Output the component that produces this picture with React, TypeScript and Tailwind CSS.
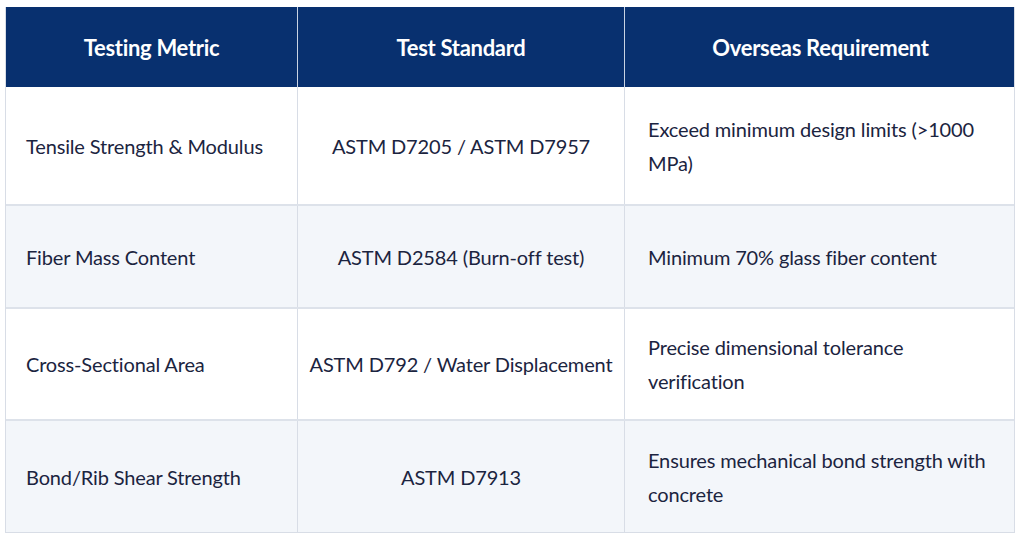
const rows = [
  {
    metric: "Tensile Strength & Modulus",
    standard: "ASTM D7205 / ASTM D7957",
    req: "Exceed minimum design limits (>1000 MPa)",
    h: "h-[117px]",
  },
  {
    metric: "Fiber Mass Content",
    standard: "ASTM D2584 (Burn-off test)",
    req: "Minimum 70% glass fiber content",
    h: "h-[103px]",
  },
  {
    metric: "Cross-Sectional Area",
    standard: "ASTM D792 / Water Displacement",
    req: "Precise dimensional tolerance verification",
    h: "h-[112px]",
  },
  {
    metric: "Bond/Rib Shear Strength",
    standard: "ASTM D7913",
    req: "Ensures mechanical bond strength with concrete",
    h: "h-[113px]",
  },
];

export default function App() {
  return (
    <div className="w-[1024px] h-[548px] bg-white pt-[7px] pl-[5px] font-['Lato','Noto_Sans',sans-serif] text-[#1b2440]">
      <div className="w-[1010px] border-x border-b border-[#d8dde6]">
        {/* header */}
        <div className="grid grid-cols-[291px_327px_392px] h-[80px] bg-[#08306f] text-white font-bold text-[22px] tracking-[-0.3px]">
          <div className="flex items-center justify-center">Testing Metric</div>
          <div className="flex items-center justify-center border-l border-[#c9d3e3]">Test Standard</div>
          <div className="flex items-center justify-center border-l border-[#c9d3e3]">Overseas Requirement</div>
        </div>

        {rows.map((r, i) => (
          <div
            key={r.metric}
            className={`grid grid-cols-[291px_327px_392px] ${r.h} text-[20px] tracking-[-0.15px] ${
              i > 0 ? "border-t-2 border-[#dde2ea]" : ""
            } ${i % 2 === 1 ? "bg-[#f3f6fa]" : "bg-white"}`}
          >
            <div className="flex items-center pl-[20px]">{r.metric}</div>
            <div className="flex items-center justify-center border-l border-[#d8dde6] text-center">
              {r.standard}
            </div>
            <div className="flex items-center border-l border-[#d8dde6] pl-[23px] pr-[20px] leading-[34px]">
              {r.req}
            </div>
          </div>
        ))}
      </div>
    </div>
  );
}
